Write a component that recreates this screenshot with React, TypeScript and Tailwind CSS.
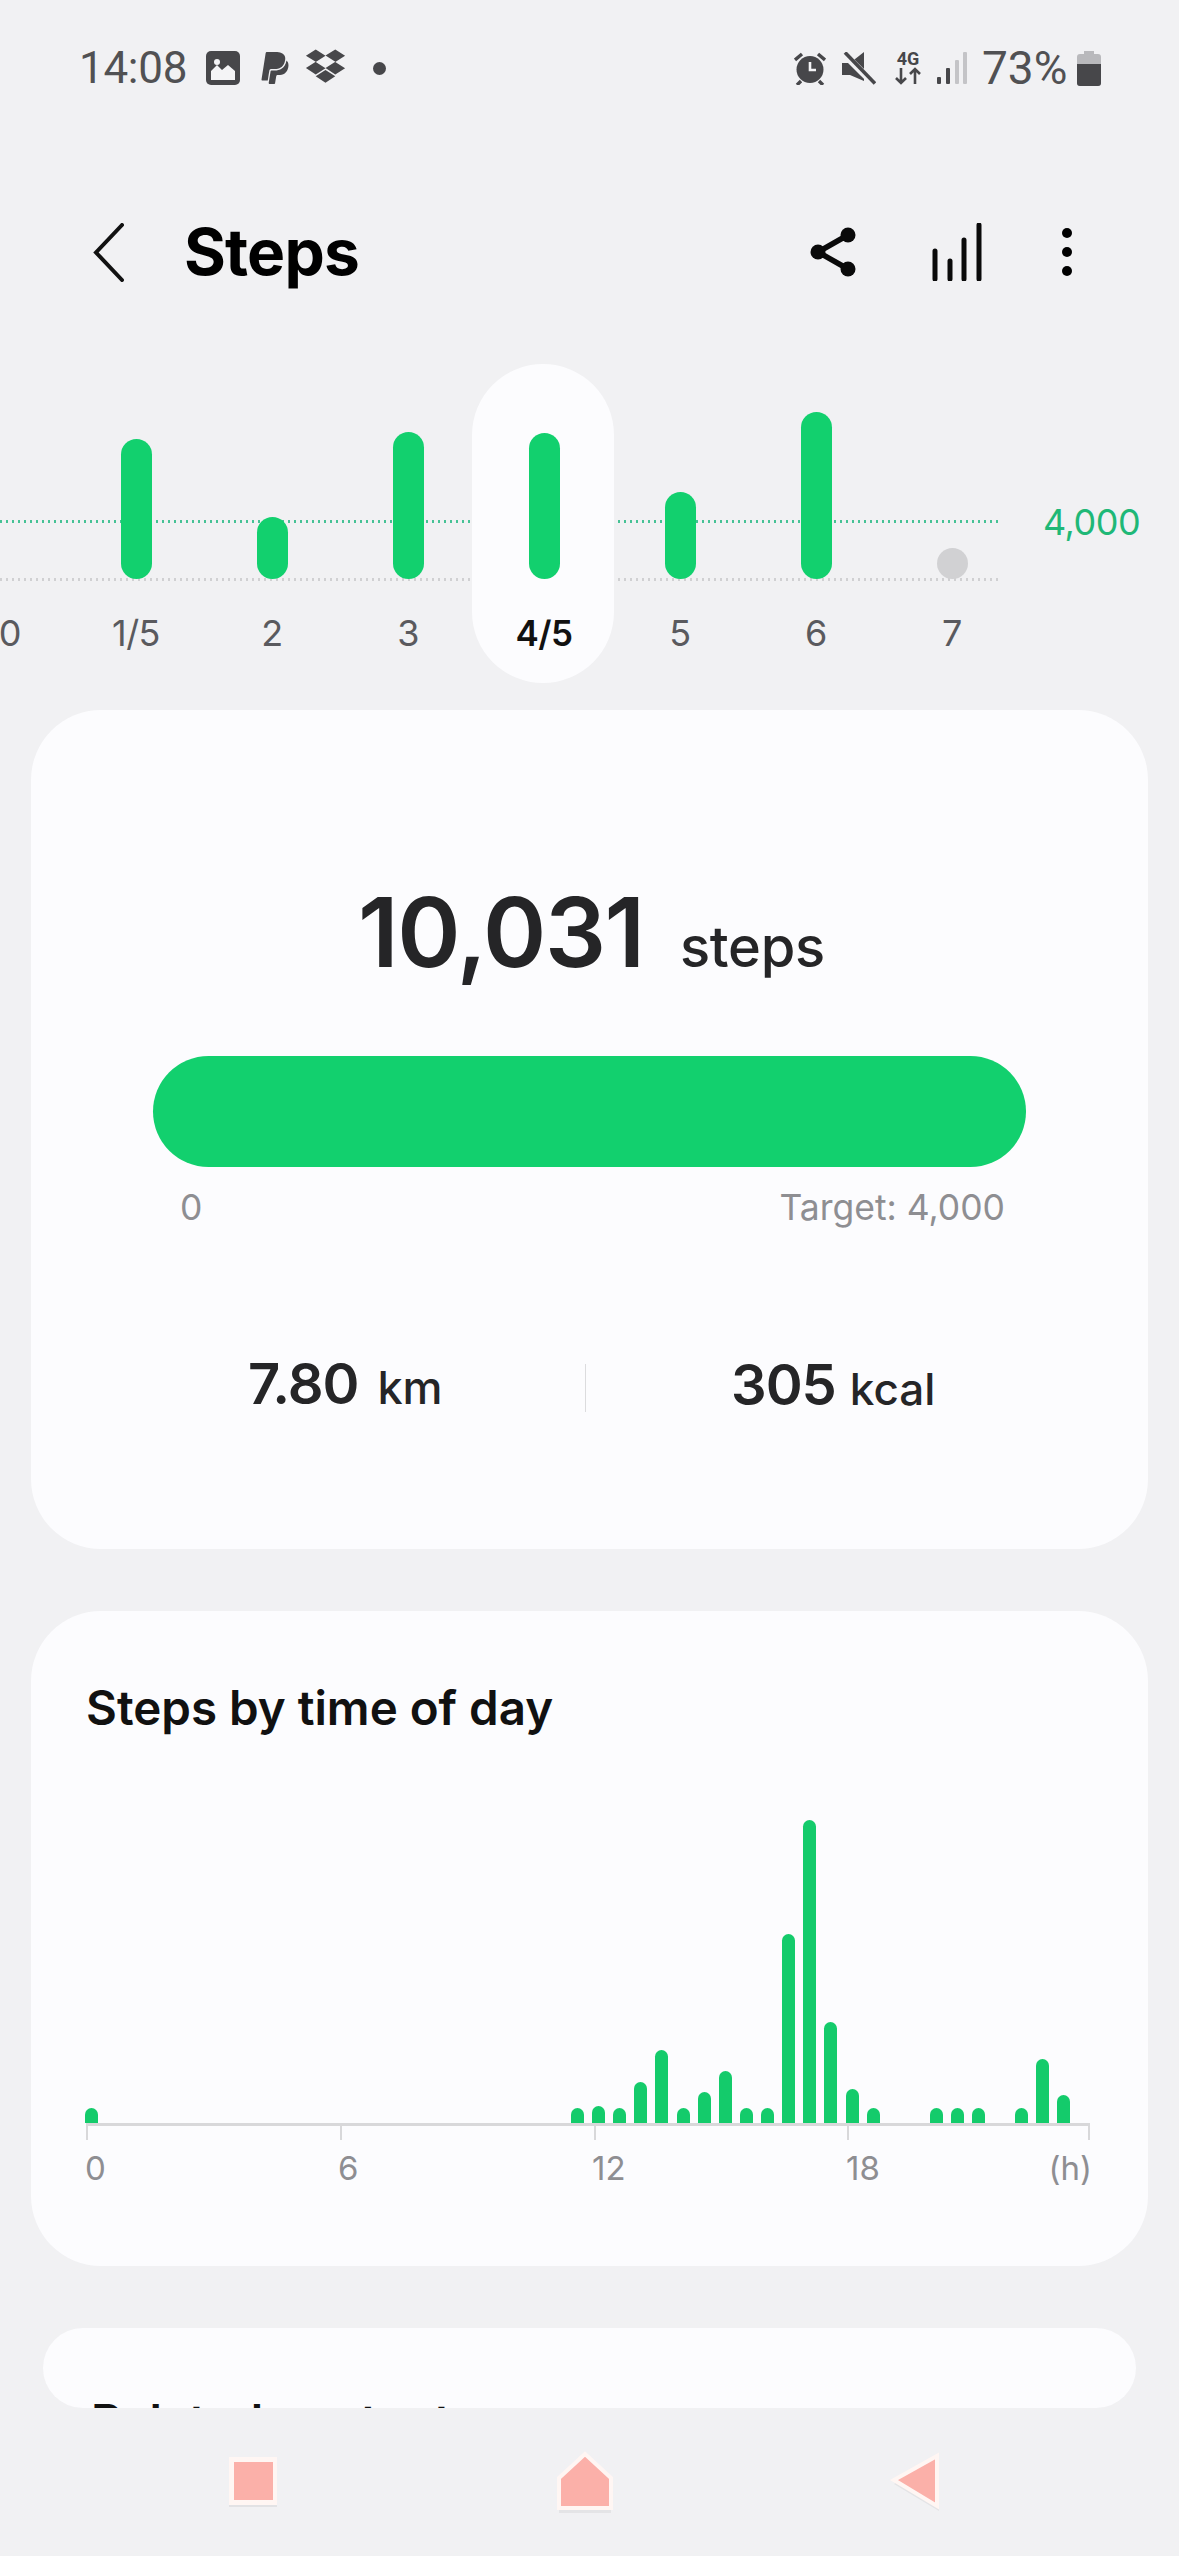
import { FaPaypal, FaDropbox } from "react-icons/fa";

const days = [
  { label: "0", h: 0 },
  { label: "1/5", h: 140 },
  { label: "2", h: 62 },
  { label: "3", h: 147 },
  { label: "4/5", h: 146, active: true },
  { label: "5", h: 87 },
  { label: "6", h: 167 },
  { label: "7", h: 31, grey: true },
];

const hourly = [
  15, 0, 0, 0, 0, 0, 0, 0, 0, 0, 0, 0, 0, 0, 0, 0, 0, 0, 0, 0, 0, 0, 0,
  15, 17, 15, 41, 73, 15, 31, 52, 15, 15, 189, 303, 101, 34, 15, 0, 0, 15, 15, 15, 0, 15, 64, 28,
];

function StatusBar() {
  return (
    <div className="h-[136px] flex items-center justify-between pl-[79px] pr-[78px] text-[#515153] shrink-0">
      <div className="flex items-center">
        <span className="text-[44px] leading-none font-[family-name:Roboto,sans-serif] tracking-[-0.3px] w-[127px]">14:08</span>
        <svg width="34" height="34" viewBox="0 0 34 34" className="mr-[20px]">
          <rect width="34" height="34" rx="5" fill="#47474a" />
          <path d="M5 29V20l6-6 5 5 6-5 7 6v9z" fill="#f4f4f6" />
          <circle cx="11" cy="11" r="3" fill="#f4f4f6" />
        </svg>
        <FaPaypal className="w-[30px] h-[36px] text-[#47474a] mr-[15px]" />
        <FaDropbox className="w-[41px] h-[38px] text-[#47474a] mr-[27px] -mt-[4px]" />
        <span className="w-[13px] h-[13px] rounded-full bg-[#47474a]" />
      </div>
      <div className="flex items-center">
        <svg width="32" height="33" viewBox="0 0 32 33" className="mr-[16px]">
          <circle cx="16" cy="17.5" r="13.5" fill="#47474a" />
          <path d="M1 8l7-6M31 8l-7-6M7 29l-4 4M25 29l4 4" stroke="#47474a" strokeWidth="3.4" />
          <path d="M16 10v8h6" stroke="#f4f4f6" strokeWidth="2.6" fill="none" />
        </svg>
        <svg width="34" height="33" viewBox="0 0 34 33" className="mr-[18px]">
          <path d="M0 11h8L22 0v29L8 23H0z" fill="#47474a" />
          <path d="M2 2l30 30" stroke="#f1f1f3" strokeWidth="7" />
          <path d="M3 0.5l30 31" stroke="#47474a" strokeWidth="3.6" />
        </svg>
        <div className="w-[28px] h-[36px] mr-[15px] flex flex-col items-center">
          <span className="text-[18px] leading-[17px] font-bold text-[#47474a] font-[family-name:Roboto,sans-serif]">4G</span>
          <svg width="28" height="18" viewBox="0 0 28 18">
            <path d="M7 1v15M2 11l5 5 5-5M21 17V2M16 7l5-5 5 5" stroke="#47474a" strokeWidth="2.6" fill="none" />
          </svg>
        </div>
        <svg width="30" height="33" viewBox="0 0 30 33" className="mr-[15px]">
          <rect x="0" y="25" width="4" height="7" rx="1" fill="#47474a" />
          <rect x="9" y="16" width="4" height="16" rx="1" fill="#47474a" />
          <rect x="18" y="8" width="4" height="24" rx="1" fill="#c4c4c7" />
          <rect x="26" y="0" width="4" height="32" rx="1" fill="#c4c4c7" />
        </svg>
        <span className="text-[46px] leading-none font-[family-name:Roboto,sans-serif] w-[95px]">73%</span>
        <svg width="24" height="35" viewBox="0 0 24 35">
          <path d="M7 0h10v3h4a3 3 0 013 3v26a3 3 0 01-3 3H3a3 3 0 01-3-3V6a3 3 0 013-3h4z" fill="#b9b9bc" />
          <path d="M0 13h24v19a3 3 0 01-3 3H3a3 3 0 01-3-3z" fill="#47474a" />
        </svg>
      </div>
    </div>
  );
}

function Header() {
  return (
    <div className="h-[228px] pt-[4px] flex items-center shrink-0 text-black">
      <svg width="31" height="59" viewBox="0 0 31 59" className="ml-[93px] mr-[60px]">
        <path d="M29 2L3 29.5 29 57" stroke="#111" strokeWidth="4" fill="none" strokeLinecap="round" />
      </svg>
      <span className="text-[64px] leading-none font-bold tracking-[-0.8px] w-[626px]">Steps</span>
      <svg width="46" height="50" viewBox="0 0 46 50" className="mr-[76px]">
        <path d="M38 8L8 25l30 17" stroke="#0a0a0a" strokeWidth="5.5" fill="none" />
        <circle cx="38" cy="8" r="7.5" fill="#0a0a0a" />
        <circle cx="8" cy="25" r="7.5" fill="#0a0a0a" />
        <circle cx="38" cy="42" r="7.5" fill="#0a0a0a" />
      </svg>
      <svg width="50" height="58" viewBox="0 0 50 58" className="mr-[80px]">
        <path d="M3 28v28M18 38v18M32 17v39M47 2v54" stroke="#0a0a0a" strokeWidth="5" strokeLinecap="round" fill="none" />
      </svg>
      <div className="flex flex-col gap-[9px]">
        <span className="w-[10px] h-[10px] rounded-full bg-black" />
        <span className="w-[10px] h-[10px] rounded-full bg-black" />
        <span className="w-[10px] h-[10px] rounded-full bg-black" />
      </div>
    </div>
  );
}

function WeekChart() {
  return (
    <div className="relative h-[319px] flex shrink-0">
      <div className="absolute left-0 top-[156px] w-[998px] h-[3px] bg-[repeating-linear-gradient(90deg,#46c295_0,#46c295_2px,transparent_2px,transparent_6px)]" />
      <div className="absolute left-0 top-[214px] w-[998px] h-[3px] bg-[repeating-linear-gradient(90deg,#d0d0d2_0,#d0d0d2_2px,transparent_2px,transparent_6px)]" />
      <span className="absolute left-[1043px] top-[136px] text-[36px] leading-[44px] tracking-[-0.5px] text-[#1fb877]">4,000</span>
      <div className="flex -ml-[68px]">
        {days.map((d) => (
          <div key={d.label} className="relative w-[136px] h-[319px] flex flex-col items-center">
            {d.active && <div className="absolute -left-[4px] -right-[2px] top-0 bottom-0 rounded-full bg-[#fcfcfe]" />}
            <div className="relative h-[215px] flex items-end shrink-0">
              {d.h > 0 && (
                <div
                  className={d.grey ? "w-[31px] rounded-full bg-[#d1d1d3]" : "w-[31px] rounded-full bg-[#12d06e]"}
                  style={{ height: d.h }}
                />
              )}
            </div>
            <div
              className={
                d.active
                  ? "relative h-[108px] shrink-0 flex items-center text-[35px] font-semibold tracking-[-0.5px] text-[#111]"
                  : d.label === "0"
                    ? "relative h-[108px] shrink-0 flex items-center pl-[20px] text-[36px] text-[#5a5a5e]"
                    : "relative h-[108px] shrink-0 flex items-center text-[36px] tracking-[-0.5px] text-[#5a5a5e]"
              }
            >
              {d.label}
            </div>
          </div>
        ))}
      </div>
    </div>
  );
}

function SummaryCard() {
  return (
    <div className="h-[839px] rounded-[70px] bg-[#fcfcfe] pt-[172px] mt-[27px] shrink-0">
      <div className="h-[100px] flex items-baseline pl-[327px] text-[#252527]">
        <span className="text-[96px] leading-[100px] font-semibold tracking-[-1.4px] w-[322px]">10,031</span>
        <span className="text-[56px] font-medium tracking-[-0.3px]">steps</span>
      </div>
      <div className="mx-[122px] mt-[74px] h-[111px] rounded-full bg-[#12d06e]" />
      <div className="mt-[19px] h-[44px] pl-[149px] pr-[143px] flex items-center justify-between text-[35.5px] text-[#8e8e92]">
        <span>0</span>
        <span>Target: 4,000</span>
      </div>
      <div className="mt-[128px] h-[60px] pl-[217px] flex items-center text-[#252527]">
        <div className="w-[337px] flex items-baseline gap-[19px]">
          <span className="text-[56px] leading-[60px] font-semibold tracking-[-1px]">7.80</span>
          <span className="text-[45px] font-medium">km</span>
        </div>
        <div className="w-px h-[48px] bg-[#dcdcde]" />
        <div className="pl-[145px] flex items-baseline gap-[14px]">
          <span className="text-[56px] leading-[60px] font-semibold tracking-[-1px]">305</span>
          <span className="text-[44px] font-medium">kcal</span>
        </div>
      </div>
    </div>
  );
}

function TimeCard() {
  return (
    <div className="h-[655px] rounded-[70px] bg-[#fcfcfe] pt-[69px] mt-[62px] shrink-0">
      <div className="pl-[55px] text-[47.5px] leading-[56px] font-semibold text-[#111]">
        Steps by time of day
      </div>
      <div className="mt-[84px] h-[303px] pl-[50px] flex items-end">
        {hourly.map((h, i) => (
          <div key={i} className="w-[21.13px] shrink-0 flex justify-center">
            {h > 0 && <div className="w-[13px] rounded-t-full bg-[#14cb6b]" style={{ height: h }} />}
          </div>
        ))}
      </div>
      <div className="ml-[55px] flex">
        <div className="w-[254px] h-[17px] border-t-[3px] border-l-2 border-[#d8d8da]" />
        <div className="w-[254px] h-[17px] border-t-[3px] border-l-2 border-[#d8d8da]" />
        <div className="w-[253px] h-[17px] border-t-[3px] border-l-2 border-[#d8d8da]" />
        <div className="w-[243px] h-[17px] border-t-[3px] border-x-2 border-[#d8d8da]" />
      </div>
      <div className="ml-[54px] mt-[9px] h-[40px] flex items-center text-[33px] text-[#8e8e92]">
        <span className="w-[253px]">0</span>
        <span className="w-[254px]">6</span>
        <span className="w-[254px]">12</span>
        <span className="w-[246px] flex justify-between">
          <span>18</span>
          <span>(h)</span>
        </span>
      </div>
    </div>
  );
}

function Related() {
  return (
    <div className="h-[80px] mx-[12px] mt-[62px] rounded-full bg-[#fcfcfe] overflow-hidden pt-[66px] pl-[48px] shrink-0">
      <div className="text-[47.5px] leading-[56px] font-semibold text-[#111]">Related content</div>
    </div>
  );
}

function NavBar() {
  return (
    <div className="flex-1 flex items-start pt-[40px] pl-[225px]">
      <svg width="56" height="68" viewBox="0 0 56 68" className="mr-[269px]">
        <rect x="4" y="11" width="48" height="48" fill="#e2e2e4" />
        <rect x="4" y="9" width="48" height="48" fill="#fff6f3" />
        <rect x="9" y="14" width="39" height="38" fill="#fbb0a9" />
      </svg>
      <svg width="70" height="72" viewBox="0 0 70 72" className="mr-[269px]">
        <path d="M35 8L9 30v33h52V30z" fill="#e4e4e6" transform="translate(0 2)" />
        <path d="M35 6L9 30v30h52V30z" fill="#fbb0a9" stroke="#fff6f3" strokeWidth="4" />
      </svg>
      <svg width="58" height="68" viewBox="0 0 58 68">
        <path d="M5 34l45-27v54z" fill="#e4e4e6" transform="translate(0 2)" />
        <path d="M5 32L48 8v50z" fill="#fbb0a9" stroke="#fff6f3" strokeWidth="4" />
      </svg>
    </div>
  );
}

export default function App() {
  return (
    <div className="w-[1179px] h-[2556px] bg-[#f1f1f3] overflow-hidden flex flex-col font-[family-name:Inter,sans-serif]">
      <StatusBar />
      <Header />
      <WeekChart />
      <div className="h-[1725px] shrink-0 overflow-hidden px-[31px] flex flex-col">
        <SummaryCard />
        <TimeCard />
        <Related />
      </div>
      <NavBar />
    </div>
  );
}
